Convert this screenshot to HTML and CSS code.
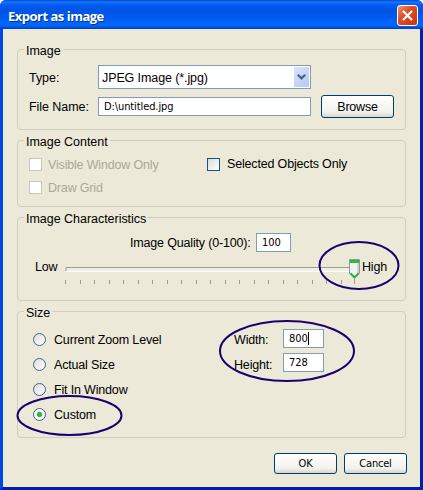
FILE: index.html
```html
<!DOCTYPE html>
<html lang="en">
<head>
<meta charset="utf-8">
<title>Export as image</title>
<link rel="stylesheet" href="styles.css">
</head>
<body>
<main class="window">
  <header class="titlebar">
    <h1>Export as image</h1>
    <button class="close" aria-label="Close"><svg width="11" height="11" viewBox="0 0 11 11"><path d="M1 1L10 10M10 1L1 10" stroke="#fff" stroke-width="2.2"/></svg></button>
  </header>
  <div class="client">
    <section class="group image">
      <h2>Image</h2>
      <div class="row type">
        <label>Type:</label>
        <div class="select"><span>JPEG Image (*.jpg)</span><i><svg width="9" height="6" viewBox="0 0 9 6"><path d="M.8 .8L4.5 4.4L8.2 .8" fill="none" stroke="#4d6185" stroke-width="2.2"/></svg></i></div>
      </div>
      <div class="row file">
        <label>File Name:</label>
        <div class="field path">D:\untitled.jpg</div>
        <button class="button browse">Browse</button>
      </div>
    </section>
    <section class="group content">
      <h2>Image Content</h2>
      <div class="checks">
        <label class="off"><i class="check"></i><span>Visible Window Only</span></label>
        <label><i class="check"></i><span class="selected">Selected Objects Only</span></label>
        <label class="off"><i class="check"></i><span>Draw Grid</span></label>
      </div>
    </section>
    <section class="group traits">
      <h2>Image Characteristics</h2>
      <div class="row quality"><label>Image Quality (0-100):</label><div class="field">100</div></div>
      <div class="slider">
        <span class="low">Low</span>
        <svg width="297" height="28" viewBox="0 0 297 28">
          <path d="M1 12V8.500H287" fill="none" stroke="#9d9c92"/>
          <path d="M2 9H286V12H2z" fill="#f2f0e5"/>
          <path d="M1 12.500H287" stroke="#fff"/>
          <path d="M.5 21v4M15.500 21v4M29.500 21v4M44.500 21v4M58.500 21v4M73.500 21v4M87.500 21v4M102.500 21v4M116.500 21v4M131.500 21v4M145.500 21v4M160.500 21v4M174.500 21v4M189.500 21v4M203.500 21v4M218.500 21v4M232.500 21v4M247.500 21v4M261.500 21v4M276.500 21v4M289.500 19v6" stroke="#9d9c92"/>
          <path d="M284.500 .5H294.500V14.500L289.500 19.500L284.500 14.500z" fill="#f3f3ef" stroke="#8199a8"/>
          <path d="M292 4h2v10l-2 2z" fill="#d3d4ce"/>
          <path d="M285 1h9v3h-9z" fill="#36b835"/>
          <path d="M285.500 14L289.500 18L293.500 14" fill="none" stroke="#22b13b" stroke-width="1.600"/>
        </svg>
        <span class="high">High</span>
      </div>
    </section>
    <section class="group size">
      <h2>Size</h2>
      <div class="sizes">
        <div class="radios">
          <label><i class="radio"></i><span>Current Zoom Level</span></label>
          <label><i class="radio"></i><span>Actual Size</span></label>
          <label><i class="radio"></i><span>Fit In Window</span></label>
          <label><i class="radio on"></i><span>Custom</span></label>
        </div>
        <div class="dims">
          <label>Width:</label><div class="field">800<b class="caret"></b></div>
          <label>Height:</label><div class="field">728</div>
        </div>
      </div>
    </section>
    <footer><button class="button">OK</button><button class="button">Cancel</button></footer>
  </div>
  <svg class="marks" width="423" height="490" viewBox="0 0 423 490" fill="none" stroke="#1c0070" stroke-width="2">
    <ellipse cx="359" cy="265.500" rx="39.500" ry="23.500"/>
    <ellipse cx="287" cy="351" rx="67" ry="30"/>
    <ellipse cx="69.500" cy="415.500" rx="52" ry="19.500"/>
  </svg>
</main>
</body>
</html>
```
FILE: styles.css
```css
* { box-sizing: border-box; }
body { margin: 0; background: #fff; font: 12.5px/16px "Liberation Sans", Arial, sans-serif; letter-spacing: -.17px; color: #000; }
h1, h2 { margin: 0; font-size: inherit; font-weight: normal; }
button { padding: 0; font: inherit; color: inherit; }
svg { display: block; flex: none; }
.window { position: relative; width: 423px; height: 490px; overflow: hidden; border-radius: 6px 6px 0 0; background: #0041d5; }
.titlebar { display: flex; justify-content: space-between; height: 29px; padding: 5px 5px 0 8px;
  background: linear-gradient(#0049c8 0, #1874ff 2px, #005df0 5px, #0054e3 10px, #0058ec 17px, #0068ff 23px, #0063fb 26px, #003dbf 29px); }
h1 { font: bold 13px/23px "Open Sans", "Noto Sans", sans-serif; letter-spacing: -.5px; color: #fff; text-shadow: 1px 1px 0 #09307e; }
.close { display: flex; align-items: center; justify-content: center; width: 21px; height: 21px; border: 1px solid #fff; border-radius: 3px; background: linear-gradient(135deg, #ef9676, #df4e26 40%, #c63507); }
.client { height: 461px; padding: 20px 14px 0; border: solid; border-width: 0 3px 3px; border-color: #0041d5 #001fae #001fae #0048e5; background: #ece9d8; }
.group { width: 389px; border: 1px solid #d0cfbf; border-radius: 4px; }
h2 { width: fit-content; height: 16px; margin: -7px 0 0 6px; padding: 0 2px; background: #ece9d8; letter-spacing: -.03px; line-height: 17px; }
.row { display: flex; align-items: center; }
.image { height: 81px; }
.image .row { padding-left: 11px; }
.image label { width: 69px; padding-top: 1px; letter-spacing: -.05px; }
.type { height: 24px; margin-top: 6px; }
.file { height: 23px; margin-top: 6px; }
.select { display: flex; justify-content: space-between; width: 213px; height: 24px; padding: 1px; border: 1px solid #7f9db9; background: #fff; line-height: 23px; }
.select span { padding-left: 2px; letter-spacing: -.1px; }
.select i { display: flex; align-items: center; justify-content: center; width: 15px; height: 20px; border-radius: 1px; background: linear-gradient(135deg, #d8e3fc, #b5c8f5); }
.field { height: 19px; padding-left: 5px; border: 1px solid #7f9db9; background: #fff; font: 11px/17px "DejaVu Sans Condensed", "DejaVu Sans", sans-serif; letter-spacing: -.1px; }
.path { width: 213px; }
.button { width: 63px; height: 21px; border: 1px solid #003c74; border-radius: 3px; background: linear-gradient(#fff, #f3f2ed 75%, #d9d5ca); font: 11px/18px "DejaVu Sans Condensed", "DejaVu Sans", sans-serif; letter-spacing: -.2px; }
.browse { width: 73px; height: 23px; margin-left: 10px; font: 12.5px/20px "Liberation Sans", Arial, sans-serif; }
.content { height: 67px; margin-top: 10px; }
.checks { display: grid; grid-template-columns: 178px auto; grid-auto-rows: 23px; margin: 8px 0 0 11px; }
.checks label { display: flex; height: 13px; align-items: center; gap: 6px; }
.checks label:nth-child(2) { gap: 7px; }
.selected { line-height: 17px; }
.check { width: 13px; height: 13px; border: 1px solid #1c5180; background: linear-gradient(135deg, #dcdcd7, #fff); }
.off { color: #aca899; }
.off .check { border-color: #cac8bb; background: #fff; }
.traits { height: 84px; margin-top: 10px; }
.quality { margin: 6px 0 0 112px; gap: 5px; height: 19px; }
.quality label { width: 121px; white-space: nowrap; }
.quality .field { width: 35px; }
.slider { display: flex; align-items: flex-start; margin: 7px 0 0 17px; }
.low { width: 30px; }
.size { height: 127px; margin-top: 10px; }
.sizes { display: flex; margin: 6px 0 0 15px; }
.radios { width: 201px; padding-top: 6px; }
.radios label { display: flex; align-items: center; gap: 8px; height: 13px; margin-bottom: 12px; }
.radio { width: 13px; height: 13px; border: 1px solid #3a6592; border-radius: 50%; background: linear-gradient(135deg, #dcdcd7, #fff); }
.radio.on { background: radial-gradient(circle, #36b835 0 2.2px, #fff 3.2px); }
.dims { display: grid; grid-template-columns: 49px 41px; grid-auto-rows: 19px; row-gap: 5px; height: 43px; margin-top: 2px; }
.dims label { line-height: 22px; }
.dims label:nth-of-type(2) { line-height: 25px; }
.caret { display: inline-block; width: 1px; height: 13px; vertical-align: -3px; background: #000; }
footer { display: flex; justify-content: flex-end; gap: 7px; margin: 15px -1px 0 0; }
.marks { position: absolute; inset: 0; }
```
